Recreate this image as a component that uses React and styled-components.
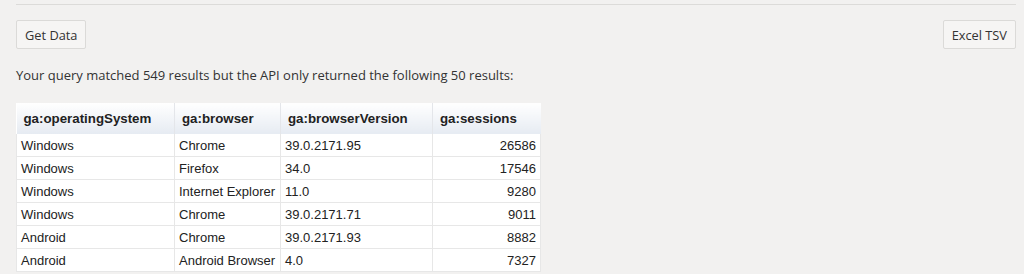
import React from 'react';
import styled, { createGlobalStyle } from 'styled-components';

const GlobalStyle = createGlobalStyle`
  html, body {
    margin: 0;
    padding: 0;
    background: #f2f1f0;
  }
  body {
    font-family: "Open Sans", "Liberation Sans", sans-serif;
    color: #333;
  }
`;

const Page = styled.div`
  padding: 4px 8px 0 16px;
`;

const Rule = styled.hr`
  margin: 0;
  border: 0;
  border-top: 1px solid #dcdbd9;
  width: 1000px;
`;

const Toolbar = styled.div`
  display: flex;
  justify-content: space-between;
  margin-top: 15px;
  width: 1000px;
`;

const Button = styled.button`
  height: 29px;
  padding: 0 8px;
  font-family: "Open Sans", "Liberation Sans", sans-serif;
  font-size: 12.8px;
  color: #333;
  background: #f6f5f4;
  border: 1px solid #dbdad8;
  border-radius: 2px;
`;

const Message = styled.p`
  margin: 18px 0 0;
  font-size: 13px;
  line-height: 17px;
  color: #333;
`;

const Table = styled.table`
  margin-top: 19px;
  border-collapse: collapse;
  font-family: "Liberation Sans", Arial, sans-serif;
  font-size: 13px;
  color: #222;
  background: #fff;
`;

const Th = styled.th`
  height: 31px;
  padding: 0 7px;
  text-align: left;
  font-size: 13.3px;
  font-weight: bold;
  color: #222;
  background: linear-gradient(#ffffff, #e6ebf2);
  border-left: 1px solid #e4e6ea;
  &:first-child { border-left: 0; }
`;

const Td = styled.td`
  height: 22px;
  padding: 0 4px;
  text-align: ${(p) => (p.$num ? 'right' : 'left')};
  border: 1px solid #e7e7e7;
  border-top: 0;
  white-space: nowrap;
`;

const columns = [
  { name: 'ga:operatingSystem', width: 158 },
  { name: 'ga:browser', width: 106 },
  { name: 'ga:browserVersion', width: 152 },
  { name: 'ga:sessions', width: 108 },
];

const rows = [
  ['Windows', 'Chrome', '39.0.2171.95', '26586'],
  ['Windows', 'Firefox', '34.0', '17546'],
  ['Windows', 'Internet Explorer', '11.0', '9280'],
  ['Windows', 'Chrome', '39.0.2171.71', '9011'],
  ['Android', 'Chrome', '39.0.2171.93', '8882'],
  ['Android', 'Android Browser', '4.0', '7327'],
];

export default function App() {
  return (
    <Page>
      <GlobalStyle />
      <Rule />
      <Toolbar>
        <Button>Get Data</Button>
        <Button>Excel TSV</Button>
      </Toolbar>
      <Message>Your query matched 549 results but the API only returned the following 50 results:</Message>
      <Table>
        <colgroup>
          {columns.map((c) => (
            <col key={c.name} style={{ width: c.width }} />
          ))}
        </colgroup>
        <thead>
          <tr>
            {columns.map((c) => (
              <Th key={c.name}>{c.name}</Th>
            ))}
          </tr>
        </thead>
        <tbody>
          {rows.map((r, i) => (
            <tr key={i}>
              {r.map((v, j) => (
                <Td key={j} $num={j === 3}>{v}</Td>
              ))}
            </tr>
          ))}
        </tbody>
      </Table>
    </Page>
  );
}
